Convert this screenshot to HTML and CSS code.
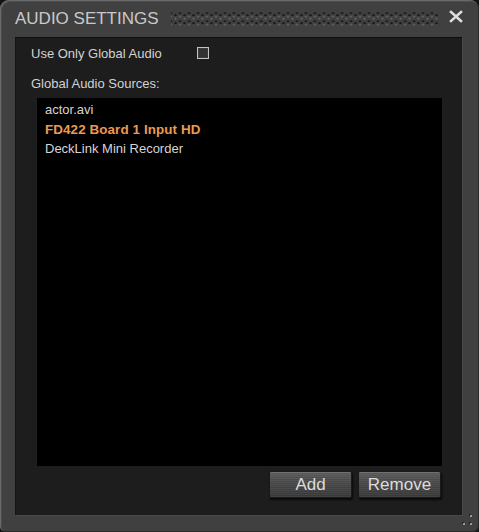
FILE: index.html
```html
<!DOCTYPE html>
<html>
<head>
<meta charset="utf-8">
<link rel="stylesheet" href="styles.css">
</head>
<body>
<div class="window">
  <div class="titlebar">
    <span class="title">AUDIO SETTINGS</span>
    <span class="dots"></span>
    <span class="close"><svg width="16" height="13" viewBox="0 0 16 13"><path d="M3 2 L13 11 M13 2 L3 11" stroke="#dedede" stroke-width="2.6" stroke-linecap="square"/></svg></span>
  </div>
  <div class="panel">
    <div class="option">
      <span class="label">Use Only Global Audio</span>
      <span class="checkbox"></span>
    </div>
    <div class="label sources">Global Audio Sources:</div>
    <div class="list">
      <div class="item">actor.avi</div>
      <div class="item selected">FD422 Board 1 Input HD</div>
      <div class="item">DeckLink Mini Recorder</div>
    </div>
    <div class="buttons">
      <button class="btn">Add</button>
      <button class="btn">Remove</button>
    </div>
  </div>
  <div class="grip">
    <span class="gd g1"></span><span class="gd g2"></span><span class="gd g3"></span>
  </div>
</div>
</body>
</html>
```
FILE: styles.css
```css
html, body {
  margin: 0;
  padding: 0;
  background: #141414;
}
body {
  width: 479px;
  height: 532px;
  overflow: hidden;
  font-family: "Liberation Sans", Arial, sans-serif;
}
.window {
  position: relative;
  box-sizing: border-box;
  width: 479px;
  height: 532px;
  background: #404040;
  border-radius: 9px 9px 6px 6px;
  box-shadow: inset 1px 1px 0 #6a6a6a, inset 2px 2px 0 #4c4c4c, inset -1px -1px 0 #2a2a2a;
  display: flex;
  flex-direction: column;
}
.titlebar {
  height: 37px;
  display: flex;
  align-items: center;
  padding: 0 0 0 15px;
}
.title {
  color: #c9c9c9;
  font-size: 17px;
  line-height: 20px;
}
.dots {
  width: 268px;
  height: 14px;
  margin-left: 12px;
  background-image:
    radial-gradient(circle at 50% 40%, #1a1a1a 0.9px, transparent 1.4px),
    radial-gradient(circle at 50% 40%, #1a1a1a 0.9px, transparent 1.4px),
    radial-gradient(circle at 50% 70%, #626262 0.8px, transparent 1.3px),
    radial-gradient(circle at 50% 70%, #626262 0.8px, transparent 1.3px);
  background-size: 9px 8px, 9px 8px, 9px 8px, 9px 8px;
  background-position: 0 0, 4.5px 6px, 0 1px, 4.5px 7px;
}
.close {
  margin-left: 9px;
  display: flex;
  width: 16px;
  height: 13px;
  margin-top: -4px;
}
.panel {
  box-sizing: border-box;
  margin-left: 15px;
  width: 447px;
  height: 478px;
  background: #1d1d1d;
  box-shadow: inset 0 1px 0 #0e0e0e, inset 1px 0 0 #141414, 1px 1px 0 #4a4a4a;
  display: flex;
  flex-direction: column;
  padding: 8px 20px 0 16px;
}
.option {
  display: flex;
  align-items: center;
  height: 18px;
}
.label {
  color: #d2d2d2;
  font-size: 13px;
  line-height: 18px;
}
.checkbox {
  box-sizing: border-box;
  width: 12px;
  height: 12px;
  margin-left: 35px;
  margin-top: -3px;
  border: 1px solid #c4c4c4;
  background: #333;
  box-shadow: inset 0 0 0 1px #3c3c3c;
}
.sources {
  margin-top: 12px;
}
.list {
  margin: 5px 0 0 6px;
  height: 368px;
  background: #000;
  padding: 2px 8px 0;
  box-sizing: border-box;
}
.item {
  color: #d6d6d6;
  font-size: 13px;
  line-height: 19.5px;
  white-space: nowrap;
}
.item.selected {
  color: #eb9a52;
  font-weight: bold;
  font-size: 13.4px;
  letter-spacing: 0.1px;
}
.buttons {
  display: flex;
  justify-content: flex-end;
  gap: 6px;
  margin-top: 5px;
  padding-right: 1px;
}
.btn {
  width: 83px;
  height: 27px;
  padding: 0;
  border: 1px solid #1a1a1a;
  border-radius: 2px;
  color: #dcdcdc;
  font-family: "Liberation Sans", Arial, sans-serif;
  font-size: 17px;
  line-height: 25px;
  background:
    repeating-linear-gradient(180deg, rgba(255,255,255,0.04) 0 1px, rgba(0,0,0,0.06) 1px 2px),
    linear-gradient(180deg, #5e5e5e 0%, #4a4a4a 45%, #3a3a3a 100%);
  box-shadow: inset 0 1px 0 #727272, 1px 2px 2px rgba(0,0,0,0.7);
}
.grip {
  position: absolute;
  right: 4px;
  bottom: 3px;
  width: 16px;
  height: 16px;
}
.gd {
  position: absolute;
  width: 2px;
  height: 2px;
  background: #9a9a9a;
  box-shadow: -1px -1px 0 #202020;
}
.g1 { left: 11px; top: 2px; }
.g2 { left: 4px; top: 10px; }
.g3 { left: 11px; top: 10px; }
```
